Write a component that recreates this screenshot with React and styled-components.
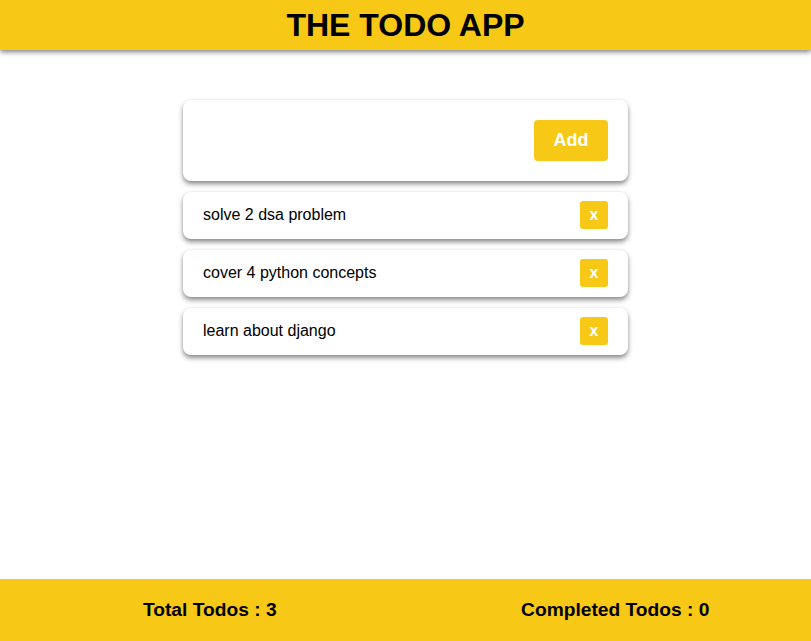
import React, { useState } from 'react';
import styled, { createGlobalStyle } from 'styled-components';

const yellow = '#f7c916';

const GlobalStyle = createGlobalStyle`
  * { box-sizing: border-box; }
  body {
    margin: 0;
    font-family: "Liberation Sans", Arial, sans-serif;
    background: #fff;
  }
`;

const Page = styled.div`
  min-height: 100vh;
  display: flex;
  flex-direction: column;
`;

const Header = styled.header`
  height: 50px;
  background: ${yellow};
  box-shadow: 0 2px 5px rgba(0, 0, 0, 0.5);
  display: flex;
  align-items: center;
  justify-content: center;
`;

const Title = styled.h1`
  margin: 0;
  font-size: 32px;
  font-weight: 700;
  color: #000;
`;

const Main = styled.main`
  width: 445px;
  margin: 50px auto 0;
  display: flex;
  flex-direction: column;
  gap: 11px;
`;

const Card = styled.div`
  background: #fff;
  border-radius: 8px;
  box-shadow: 0 3px 5px rgba(0, 0, 0, 0.45), 0 0 3px rgba(0, 0, 0, 0.06);
  display: flex;
  align-items: center;
  justify-content: space-between;
  padding: ${({ $big }) => ($big ? '20px' : '9px 20px 10px')};
`;

const Input = styled.input`
  flex: 1;
  border: none;
  outline: none;
  font-size: 16px;
  font-family: inherit;
  background: transparent;
  margin-right: 16px;
`;

const AddButton = styled.button`
  width: 74px;
  height: 41px;
  border: none;
  border-radius: 4px;
  background: ${yellow};
  color: #fff;
  font-family: inherit;
  font-size: 18px;
  font-weight: 700;
  cursor: pointer;
`;

const TodoText = styled.span`
  font-size: 16px;
  color: #000;
`;

const RemoveButton = styled.button`
  width: 28px;
  height: 28px;
  border: none;
  border-radius: 3px;
  background: ${yellow};
  color: #fff;
  font-family: inherit;
  font-size: 16px;
  font-weight: 700;
  padding: 0;
  cursor: pointer;
`;

const Footer = styled.footer`
  margin-top: auto;
  height: 62px;
  background: ${yellow};
  display: flex;
  align-items: center;
`;

const Stat = styled.div`
  flex: 1;
  padding-left: 14px;
  text-align: center;
  font-size: 19.2px;
  font-weight: 700;
  color: #000;
`;

export default function App() {
  const [todos, setTodos] = useState([
    'solve 2 dsa problem',
    'cover 4 python concepts',
    'learn about django',
  ]);
  const [text, setText] = useState('');

  const add = () => {
    if (!text.trim()) return;
    setTodos([...todos, text.trim()]);
    setText('');
  };

  return (
    <Page>
      <GlobalStyle />
      <Header>
        <Title>THE TODO APP</Title>
      </Header>
      <Main>
        <Card $big>
          <Input value={text} onChange={(e) => setText(e.target.value)} />
          <AddButton onClick={add}>Add</AddButton>
        </Card>
        {todos.map((t, i) => (
          <Card key={i}>
            <TodoText>{t}</TodoText>
            <RemoveButton onClick={() => setTodos(todos.filter((_, j) => j !== i))}>x</RemoveButton>
          </Card>
        ))}
      </Main>
      <Footer>
        <Stat>Total Todos : {todos.length}</Stat>
        <Stat>Completed Todos : 0</Stat>
      </Footer>
    </Page>
  );
}
